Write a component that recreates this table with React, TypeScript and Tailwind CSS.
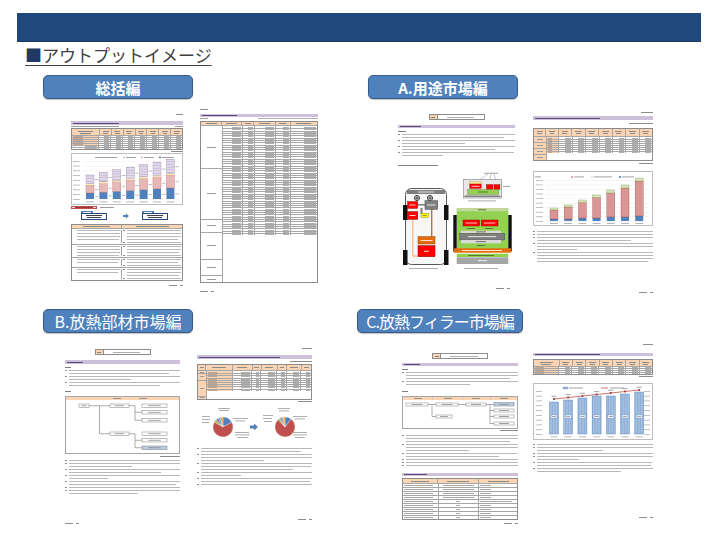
import React from "react";

// Thumbnails of the report pages are drawn as miniature documents:
// grey hairlines stand for body text, orange/lavender blocks for table heads and section bars.

const fx = (w: number) => ({ flex: `${w} 1 0px`, minWidth: 0 });

function Dash({ w = 60, c = "bg-[#9d9d9d]" }: { w?: number; c?: string }) {
  return <div className={`h-px shrink-0 ${c}`} style={{ width: `${w}%` }} />;
}

const LW = [100, 97, 100, 98, 100, 99, 96, 100, 98, 100, 97, 100, 98, 99];
const LAST = [0.9, 0.55, 0.8, 0.35, 0.95, 0.7, 0.6, 0.85];

function Paras({ paras, numbered = true }: { paras: number[]; numbered?: boolean }) {
  let k = 0;
  return (
    <div className="flex flex-col gap-[2px]">
      {paras.flatMap((n, p) =>
        Array.from({ length: n }, (_, i) => {
          const base = LW[k++ % LW.length];
          const w = n > 1 && i === n - 1 ? base * LAST[p % LAST.length] : base;
          return (
            <div key={`${p}-${i}`} className="flex h-px items-center gap-[2px]">
              <div className={`h-px w-[2px] shrink-0 ${numbered && i === 0 ? "bg-[#8c8c8c]" : ""}`} />
              <div className="h-px bg-[#b9b9b9]" style={{ width: `${w}%` }} />
            </div>
          );
        })
      )}
    </div>
  );
}

function LavBar({ w = 45, h = "h-[4px]" }: { w?: number; h?: string }) {
  return (
    <div className={`${h} flex items-center bg-[#ccc0da] pl-[2px]`}>
      <Dash w={w} c="bg-[#5f497a]" />
    </div>
  );
}

function Label({ right = true, w = "w-[10px]" }: { right?: boolean; w?: string }) {
  return (
    <div className={`flex h-px ${right ? "justify-end" : "justify-start"}`}>
      <div className={`h-px ${w} bg-[#8c8c8c]`} />
    </div>
  );
}

function PageNo({ right = true }: { right?: boolean }) {
  return (
    <div className={`flex h-px ${right ? "justify-end" : "justify-start"}`}>
      <div className="flex gap-[3px]">
        <div className="h-px w-[8px] bg-[#8c8c8c]" />
        <div className="h-px w-[3px] bg-[#8c8c8c]" />
      </div>
    </div>
  );
}

function TitleBox() {
  return (
    <div className="mx-auto flex h-[6px] w-[56px] border border-[#8c8c8c]">
      <div className="flex w-[8px] items-center justify-center border-r border-[#8c8c8c] bg-[#fbd4b4]">
        <div className="h-px w-[4px] bg-[#7f7f7f]" />
      </div>
      <div className="flex flex-1 items-center justify-center">
        <Dash w={60} c="bg-[#b0b0b0]" />
      </div>
    </div>
  );
}

function TRow({
  cols,
  h,
  orange = 0,
  head = false,
  top = true,
}: {
  cols: number[];
  h: number;
  orange?: number;
  head?: boolean;
  top?: boolean;
}) {
  return (
    <div className={`flex ${top ? "border-t border-[#a6a6a6]" : ""}`} style={{ height: h }}>
      {cols.map((w, i) => (
        <div
          key={i}
          style={fx(w)}
          className={`flex flex-col gap-[1px] ${i ? "border-l border-[#a6a6a6]" : ""} ${
            head || i < orange ? "bg-[#fbd4b4]" : "bg-white"
          } ${head ? "items-center justify-center" : i < orange ? "items-start justify-center pl-[1px]" : "items-end justify-center pr-[1px]"}`}
        >
          <Dash w={head ? 55 : i < orange ? 40 : 50} c={head ? "bg-[#8a8a8a]" : i < orange ? "bg-[#c4a48c]" : "bg-[#b0b0b0]"} />
          {head && h >= 6 ? <Dash w={40} c="bg-[#8a8a8a]" /> : null}
        </div>
      ))}
    </div>
  );
}

function GroupTable({
  left,
  groups,
  cols,
  rowH,
  headH,
  orange = 0,
  leftBg = "bg-[#fbd4b4]",
}: {
  left: number;
  groups: number[];
  cols: number[];
  rowH: number;
  headH: number;
  orange?: number;
  leftBg?: string;
}) {
  const total = groups.reduce((a, b) => a + b, 0);
  return (
    <div className="border border-[#8c8c8c]">
      <TRow cols={[left, ...cols]} h={headH} head top={false} />
      <div className="flex border-t border-[#a6a6a6]">
        <div style={fx(left)} className={`flex flex-col ${leftBg}`}>
          {groups.map((g, i) => (
            <div
              key={i}
              style={{ height: g * (rowH + 1) - (i === 0 ? 1 : 0) }}
              className={`flex items-center justify-center ${i ? "border-t border-[#a6a6a6]" : ""}`}
            >
              <Dash w={45} c="bg-[#9a9a9a]" />
            </div>
          ))}
        </div>
        <div style={fx(cols.reduce((a, b) => a + b, 0))} className="flex flex-col border-l border-[#a6a6a6]">
          {Array.from({ length: total }, (_, i) => (
            <TRow key={i} cols={cols} h={rowH} orange={orange} top={i > 0} />
          ))}
        </div>
      </div>
    </div>
  );
}

/* ---------- charts & diagrams ---------- */

function SummaryChart() {
  const bars = Array.from({ length: 7 }, (_, i) => {
    const t = i / 6;
    return [6 + 5 * t, 8 + 5 * t, 1.5, 8.5 + 5.5 * t];
  });
  const fills = ["#4f81bd", "#e6b9b8", "#fff2b3", "#ccc0da"];
  return (
    <svg width="112" height="52" className="block">
      <rect x="0.5" y="0.5" width="111" height="51" fill="#fff" stroke="#bfbfbf" />
      <rect x="24" y="4" width="22" height="0.8" fill="#8c8c8c" />
      <rect x="52" y="3.6" width="2" height="1.6" fill="#ccc0da" />
      <rect x="55" y="4" width="10" height="0.8" fill="#8c8c8c" />
      <rect x="70" y="3.6" width="2" height="1.6" fill="#e6b9b8" />
      <rect x="73" y="4" width="10" height="0.8" fill="#8c8c8c" />
      <rect x="88" y="3.6" width="2" height="1.6" fill="#4f81bd" />
      <rect x="91" y="4" width="12" height="0.8" fill="#8c8c8c" />
      {Array.from({ length: 9 }, (_, k) => (
        <g key={k}>
          <rect x="2" y={8 + k * 4.75} width="7" height="0.7" fill="#a6a6a6" />
          <rect x="12" y={8.3 + k * 4.75} width="97" height="0.3" fill="#e3e3e3" />
        </g>
      ))}
      {bars.map((segs, i) => {
        const x = 15 + i * 13.4;
        let y = 46;
        return (
          <g key={i}>
            {segs.map((h, j) => {
              y -= h;
              const top = y;
              return (
                <g key={j}>
                  <rect x={x} y={top} width="8" height={h} fill={fills[j]} stroke={j === 1 ? "#c0504d" : j === 3 ? "#8064a2" : "none"} strokeWidth="0.3" />
                  {j === 3
                    ? Array.from({ length: Math.floor(h / 1.6) }, (_, s) => (
                        <rect key={s} x={x} y={top + 0.8 + s * 1.6} width="8" height="0.4" fill="#fff" />
                      ))
                    : null}
                  {j !== 2 ? <rect x={x + 9} y={top + h / 2} width="3.5" height="0.7" fill="#a6a6a6" /> : null}
                </g>
              );
            })}
            <rect x={x} y="48.5" width="8" height="0.8" fill="#a6a6a6" />
          </g>
        );
      })}
    </svg>
  );
}

function MarketChart() {
  const tot = [13, 16, 21, 26, 31, 36, 43];
  const blue = [2, 2, 3, 3, 4, 4, 5];
  const grn = [2, 2, 2.5, 2.5, 3, 3, 3];
  return (
    <svg width="120" height="55" className="block">
      <rect x="0.5" y="0.5" width="119" height="54" fill="#fff" stroke="#bfbfbf" />
      <rect x="2" y="5.5" width="6" height="0.8" fill="#8c8c8c" />
      <rect x="38" y="5.2" width="2" height="1.6" fill="#d99694" />
      <rect x="41" y="5.5" width="10" height="0.8" fill="#8c8c8c" />
      <rect x="58" y="5.2" width="2" height="1.6" fill="#d7e4bd" />
      <rect x="61" y="5.5" width="18" height="0.8" fill="#8c8c8c" />
      <rect x="86" y="5.2" width="2" height="1.6" fill="#4f81bd" />
      <rect x="89" y="5.5" width="12" height="0.8" fill="#8c8c8c" />
      {Array.from({ length: 10 }, (_, k) => (
        <g key={k}>
          <rect x="3" y={9 + k * 4.55} width="7" height="0.7" fill="#a6a6a6" />
          <rect x="13" y={9.3 + k * 4.55} width="103" height="0.3" fill="#dedede" />
        </g>
      ))}
      {tot.map((t, i) => {
        const x = 17 + i * 14.2;
        const b = 50;
        return (
          <g key={i}>
            <rect x={x} y={b - blue[i]} width="8" height={blue[i]} fill="#4f81bd" />
            <rect x={x} y={b - t + grn[i]} width="8" height={t - blue[i] - grn[i]} fill="#d99694" stroke="#953735" strokeWidth="0.3" />
            <rect x={x} y={b - t} width="8" height={grn[i]} fill="#d7e4bd" stroke="#77933c" strokeWidth="0.3" />
            <rect x={x} y="52" width="8" height="0.8" fill="#a6a6a6" />
          </g>
        );
      })}
    </svg>
  );
}

function FillerChart() {
  const tops = [19, 17, 15, 13, 13, 11, 9];
  const line = [16, 14.5, 13, 11.5, 10, 8.5, 7];
  const cx = (i: number) => 21 + i * 14.2;
  return (
    <svg width="120" height="57" className="block">
      <defs>
        <pattern id="stripe" width="1.6" height="4" patternUnits="userSpaceOnUse">
          <rect width="1.6" height="4" fill="#a9c2e2" />
          <rect width="0.5" height="4" fill="#7fa2cf" />
        </pattern>
      </defs>
      <rect x="0.5" y="0.5" width="119" height="56" fill="#fff" stroke="#bfbfbf" />
      <rect x="30" y="4" width="5" height="2" fill="#95b3d7" stroke="#4f81bd" strokeWidth="0.3" />
      <rect x="36" y="4.6" width="14" height="0.8" fill="#8c8c8c" />
      <rect x="68" y="4.6" width="7" height="0.8" fill="#c0504d" />
      <rect x="77" y="4.6" width="14" height="0.8" fill="#8c8c8c" />
      {Array.from({ length: 10 }, (_, k) => (
        <g key={k}>
          <rect x="3" y={8 + k * 4.8} width="6" height="0.7" fill="#a6a6a6" />
          <rect x="111" y={8 + k * 4.8} width="6" height="0.7" fill="#a6a6a6" />
        </g>
      ))}
      {tops.map((t, i) => (
        <g key={i}>
          <rect x={cx(i) - 4.5} y={t} width="9" height={51 - t} fill="url(#stripe)" stroke="#4f81bd" strokeWidth="0.4" />
          <rect x={cx(i) - 3} y="32" width="6" height="3" fill="#fff" stroke="#4f81bd" strokeWidth="0.3" />
          <rect x={cx(i) - 2} y="33.1" width="4" height="0.8" fill="#8c8c8c" />
          <rect x={cx(i) - 3.5} y="53.5" width="7" height="0.8" fill="#a6a6a6" />
          <rect x={cx(i) - 2.5} y={line[i] - 3.2} width="5" height="0.8" fill="#8c8c8c" />
        </g>
      ))}
      <polyline points={line.map((y, i) => `${cx(i)},${y}`).join(" ")} fill="none" stroke="#c0504d" strokeWidth="0.8" />
      {line.map((y, i) => (
        <rect key={i} x={cx(i) - 0.9} y={y - 0.9} width="1.8" height="1.8" fill="#953735" />
      ))}
    </svg>
  );
}

function arc(cx: number, cy: number, r: number, a0: number, a1: number) {
  const p = (a: number) => [cx + r * Math.sin((a * Math.PI) / 180), cy - r * Math.cos((a * Math.PI) / 180)];
  const [x0, y0] = p(a0);
  const [x1, y1] = p(a1);
  return `M${cx},${cy} L${x0},${y0} A${r},${r} 0 ${a1 - a0 > 180 ? 1 : 0} 1 ${x1},${y1} Z`;
}

function Pies() {
  const L: [number, number, string][] = [
    [0, 62, "#4f81bd"],
    [62, 300, "#c0504d"],
    [300, 316, "#9bbb59"],
    [316, 330, "#8064a2"],
    [330, 344, "#4bacc6"],
    [344, 360, "#f79646"],
  ];
  const R: [number, number, string][] = [
    [0, 38, "#4f81bd"],
    [38, 318, "#c0504d"],
    [318, 330, "#9bbb59"],
    [330, 340, "#8064a2"],
    [340, 350, "#4bacc6"],
    [350, 360, "#f79646"],
  ];
  const labels = [
    [21, 2, 12], [22, 4, 10],
    [5, 10, 8], [5, 13, 8], [5, 16, 7],
    [36, 12, 15], [38, 14.5, 10],
    [38, 26, 14], [38, 28.5, 15], [40, 31, 11],
    [81, 2, 12], [82, 4.5, 10],
    [66, 9, 10], [66, 12, 9], [67, 15, 8],
    [96, 10, 14], [98, 12.5, 10],
    [95, 26, 15], [96, 28.5, 14], [98, 31, 10],
  ];
  return (
    <svg width="115" height="40" className="block">
      {L.map(([a, b, c], i) => (
        <path key={i} d={arc(26, 21, 10, a, b)} fill={c} stroke="#fff" strokeWidth="0.3" />
      ))}
      {R.map(([a, b, c], i) => (
        <path key={i} d={arc(88, 21, 10, a, b)} fill={c} stroke="#fff" strokeWidth="0.3" />
      ))}
      <path d="M53 19.5 H57 V17.5 L61 21 L57 24.5 V22.5 H53 Z" fill="#4f81bd" />
      {labels.map(([x, y, w], i) => (
        <rect key={i} x={x} y={y} width={w} height="0.8" fill="#9a9a9a" />
      ))}
    </svg>
  );
}

function Bx({ x, y, w, h = 3.5, fill = "#fff" }: { x: number; y: number; w: number; h?: number; fill?: string }) {
  return (
    <g>
      <rect x={x} y={y} width={w} height={h} fill={fill} stroke="#7f7f7f" strokeWidth="0.5" />
      <rect x={x + w * 0.25} y={y + h / 2 - 0.4} width={w * 0.5} height="0.8" fill="#8c8c8c" />
    </g>
  );
}

function TreeB() {
  const ln = { stroke: "#595959", strokeWidth: 0.5, fill: "none" };
  return (
    <svg width="115" height="58" className="block">
      <rect x="0.5" y="0.5" width="114" height="57" fill="#fff" stroke="#a6a6a6" />
      <rect x="1" y="1" width="113" height="3" fill="#fbd4b4" />
      <rect x="48" y="2.1" width="8" height="0.8" fill="#7f7f7f" />
      <rect x="74" y="2.1" width="8" height="0.8" fill="#7f7f7f" />
      <path d="M24 9.75 H45 M34.5 9.75 V37.75 H45 M64 9.75 H70 M70 9.75 V24.25 H77 M70 16.25 H77 M64 37.75 H70 M70 37.75 V51.75 H77 M70 44.25 H77" {...ln} />
      <Bx x={14} y={8} w={10} />
      <Bx x={45} y={8} w={19} />
      <Bx x={77} y={8} w={25} />
      <Bx x={77} y={14.5} w={25} />
      <Bx x={77} y={22.5} w={25} />
      <Bx x={45} y={36} w={19} />
      <Bx x={77} y={36} w={25} />
      <Bx x={77} y={42.5} w={25} />
      <Bx x={77} y={50} w={25} fill="#b8cce4" />
    </svg>
  );
}

function TreeC() {
  const ln = { stroke: "#595959", strokeWidth: 0.5, fill: "none" };
  return (
    <svg width="116" height="33" className="block">
      <rect x="0.5" y="0.5" width="115" height="32" fill="#fff" stroke="#a6a6a6" />
      <rect x="1" y="1" width="114" height="3" fill="#fbd4b4" />
      {[30, 60, 88].map((x) => (
        <rect key={x} x={x} y="1" width="0.4" height="3" fill="#a6a6a6" />
      ))}
      {[12, 42, 70, 98].map((x) => (
        <rect key={x} x={x} y="2.1" width="8" height="0.8" fill="#7f7f7f" />
      ))}
      <path d="M26 8.5 H34 M30 8.5 V20.5 H34 M56 8.5 H64 M84 8.5 H92 M88 8.5 V27.5 H92 M88 14.5 H92 M88 20.5 H92" {...ln} />
      <Bx x={4} y={7} w={22} h={3} />
      <Bx x={34} y={7} w={22} h={3} />
      <Bx x={64} y={7} w={20} h={3} />
      <Bx x={92} y={6.5} w={20} h={3.5} fill="#b8cce4" />
      <Bx x={92} y={13} w={20} h={3} />
      <Bx x={92} y={19} w={20} h={3} />
      <Bx x={92} y={26} w={20} h={3} />
      <Bx x={34} y={19} w={16} h={3} />
    </svg>
  );
}

function CarDiagram() {
  const wd = (x: number, y: number, w: number, c = "#ffffff") => (
    <rect x={x} y={y} width={w} height="0.8" fill={c} />
  );
  return (
    <svg width="117" height="98" className="block">
      {/* vehicle */}
      <rect x="7.5" y="16.5" width="41" height="76" rx="6" fill="#f7f7f7" stroke="#595959" strokeWidth="1" />
      <rect x="5" y="33" width="4.5" height="15" fill="#111" />
      <rect x="46" y="33" width="4.5" height="15" fill="#111" />
      <rect x="5" y="78" width="4.5" height="15" fill="#111" />
      <rect x="46" y="78" width="4.5" height="15" fill="#111" />
      <rect x="9" y="18" width="38" height="4" fill="#7f7f7f" />
      {wd(20, 19.6, 16)}
      <circle cx="19" cy="26" r="2.6" fill="#fff" stroke="#000" strokeWidth="0.7" />
      <path d="M16.6 26 H21.4 M19 23.6 V28.4" stroke="#000" strokeWidth="0.7" />
      <circle cx="32" cy="26" r="2.6" fill="#fff" stroke="#000" strokeWidth="0.7" />
      <path d="M29.6 26 H34.4 M32 23.6 V28.4" stroke="#000" strokeWidth="0.7" />
      <path d="M14.7 47.3 V84 H20" stroke="#fac090" strokeWidth="1.4" fill="none" />
      <path d="M33.7 37 V64.7" stroke="#c0703a" strokeWidth="1.4" fill="none" />
      <rect x="19.7" y="32" width="7.3" height="1.5" fill="#7f7f7f" />
      <rect x="22.5" y="36" width="2" height="6" fill="#7f7f7f" />
      <rect x="9.7" y="29.7" width="10" height="6.6" fill="#ff0000" stroke="#7f0000" strokeWidth="0.5" />
      {wd(11.5, 32.6, 6)}
      <rect x="27" y="28.7" width="12.7" height="8.6" fill="#808080" stroke="#404040" strokeWidth="0.5" />
      {wd(29, 32.6, 8.5)}
      <rect x="9.7" y="39.7" width="10" height="7.6" fill="#ff0000" stroke="#7f0000" strokeWidth="0.5" />
      {wd(11.5, 43.1, 6)}
      <rect x="23" y="41.3" width="7.3" height="4" fill="#ffff00" stroke="#7f7f00" strokeWidth="0.4" />
      {wd(24.5, 43, 4.3, "#7f7f7f")}
      <rect x="20" y="64.7" width="17" height="7.3" fill="#e46c0a" stroke="#974706" strokeWidth="0.5" />
      {wd(22.5, 68, 12)}
      <rect x="20" y="73.7" width="17" height="11" fill="#ff0000" stroke="#7f0000" strokeWidth="0.5" />
      {wd(26, 78.8, 5)}
      {wd(11, 96, 29, "#9a9a9a")}

      {/* module cross-section */}
      {wd(86, 0.8, 14, "#8c8c8c")}
      <path d="M90 2 L77 11 M93 2 L91 12.5 M96 2 L99 12.5" stroke="#404040" strokeWidth="0.3" />
      <rect x="65.5" y="7.5" width="38" height="18.5" fill="#e8e8e8" stroke="#7f7f7f" strokeWidth="0.6" />
      <rect x="71.7" y="9.8" width="11.6" height="2.2" fill="#ffe699" stroke="#7f6000" strokeWidth="0.2" />
      <rect x="71.7" y="12" width="11.6" height="4.5" fill="#ff0000" stroke="#7f0000" strokeWidth="0.3" />
      {wd(73.5, 13.8, 8)}
      <rect x="88.3" y="12.5" width="6.7" height="5" fill="#ff0000" stroke="#7f0000" strokeWidth="0.3" />
      <rect x="96" y="12.5" width="6" height="5" fill="#ff0000" stroke="#7f0000" strokeWidth="0.3" />
      <rect x="69.7" y="17.5" width="31" height="5" fill="#92d050" stroke="#4f6228" strokeWidth="0.3" />
      {wd(80, 19.6, 10, "#4f6228")}
      <rect x="66.5" y="23.5" width="36" height="1.5" fill="#7f7f7f" />
      {wd(105, 14, 7, "#8c8c8c")}
      {wd(70, 28.5, 28, "#9a9a9a")}

      {/* vehicle layout */}
      <rect x="58.7" y="36.3" width="51.6" height="43.4" fill="#92d050" />
      <rect x="58.7" y="36.3" width="51.6" height="3" fill="#c3d69b" />
      {wd(80, 37.4, 8, "#4f6228")}
      <rect x="55.3" y="43" width="3.4" height="36.7" fill="#111" />
      <rect x="110.3" y="43" width="3.4" height="36.7" fill="#111" />
      <rect x="65" y="48" width="16.7" height="6" fill="#ff0000" stroke="#7f0000" strokeWidth="0.4" />
      {wd(67.5, 50.6, 11.5)}
      <rect x="83.3" y="48" width="16.7" height="6" fill="#ff0000" stroke="#7f0000" strokeWidth="0.4" />
      {wd(85.8, 50.6, 11.5)}
      {wd(69, 56.2, 8, "#4f6228")}
      {wd(87, 56.2, 8, "#4f6228")}
      <rect x="63" y="58.7" width="40" height="2.6" fill="#d9d9d9" />
      {wd(78, 59.5, 10, "#595959")}
      <rect x="61.7" y="61.3" width="45" height="6.7" fill="#7f7f7f" stroke="#404040" strokeWidth="0.4" />
      {wd(70, 64.3, 28)}
      <rect x="63" y="68" width="40" height="3.3" fill="#d9d9d9" />
      {wd(78, 69.3, 10, "#595959")}
      {wd(79, 73, 8, "#4f6228")}
      <rect x="56" y="76.3" width="57" height="4.4" fill="#e46c0a" />
      {wd(64, 78.1, 40)}
      <rect x="58.7" y="81.7" width="51.6" height="3.3" fill="#92d050" />
      {wd(70, 83, 26, "#4f6228")}
      <rect x="58.7" y="85.3" width="51.6" height="6.7" fill="#a6a6a6" />
      {wd(80, 88.3, 9)}
      {wd(66, 96, 34, "#9a9a9a")}
    </svg>
  );
}

/* ---------- pages ---------- */

function MiniBox() {
  return (
    <div className="flex w-[26px] flex-col">
      <div className="flex h-[2px] w-[12px] items-center justify-center bg-[#4f81bd]">
        <div className="h-px w-[8px] bg-white" />
      </div>
      <div className="flex h-[7px] flex-col items-center justify-center gap-[1px] border border-[#1f497d] bg-white">
        <Dash w={70} c="bg-[#404040]" />
        <Dash w={55} c="bg-[#404040]" />
      </div>
    </div>
  );
}

function PageSummary() {
  return (
    <div className="flex flex-col">
      <Label w="w-[7px]" />
      <div className="mt-[6px]">
        <LavBar w={42} />
      </div>
      <div className="mt-[1px] flex h-px justify-between">
        <div className="h-px w-[48px] bg-[#9d9d9d]" />
        <div className="h-px w-[8px] bg-[#9d9d9d]" />
      </div>
      <div className="mt-[1px] border border-[#8c8c8c]">
        <TRow cols={[30, 12, 12, 12, 12, 12, 12, 12]} h={6} head top={false} />
        {Array.from({ length: 7 }, (_, i) => (
          <TRow key={i} cols={[30, 12, 12, 12, 12, 12, 12, 12]} h={2} orange={i < 5 ? 1 : 0} />
        ))}
      </div>
      <div className="mt-[1px]">
        <Label w="w-[12px]" />
      </div>
      <div className="mt-[1px]">
        <SummaryChart />
      </div>
      <div className="mt-[1px] flex h-[3px] items-center gap-[3px]">
        <div className="flex h-[3px] w-[26px] items-center justify-center border border-[#c0504d] bg-[#f2dcdb]">
          <div className="h-px w-[18px] bg-[#953735]" />
        </div>
        <div className="h-px w-[14px] bg-[#9d9d9d]" />
      </div>
      <div className="mt-[2px] flex h-[10px] items-start pl-[10px]">
        <MiniBox />
        <svg width="8" height="10" className="ml-[15px] block">
          <path d="M1 4 H4 V2.5 L7 5 L4 7.5 V6 H1 Z" fill="#4f81bd" />
        </svg>
        <div className="ml-[12px]">
          <MiniBox />
        </div>
      </div>
      <div className="mt-[3px] border border-[#8c8c8c]">
        <TRow cols={[45, 55]} h={3} head top={false} />
        {[
          [4, 4],
          [4, 3],
          [2, 2],
          [2, 3],
        ].map(([a, b], i) => (
          <div key={i} className="flex border-t border-[#a6a6a6] py-[1px]">
            <div style={fx(45)} className="px-[1px]">
              <Paras paras={[a]} numbered={false} />
            </div>
            <div style={fx(55)} className="border-l border-[#a6a6a6] px-[1px]">
              <Paras paras={[b, 1]} />
            </div>
          </div>
        ))}
      </div>
      <div className="mt-[4px]">
        <PageNo />
      </div>
    </div>
  );
}

function PageSpec() {
  return (
    <div className="flex flex-col">
      <Label right={false} w="w-[8px]" />
      <div className="mt-[4px]">
        <LavBar w={30} h="h-[3px]" />
      </div>
      <div className="mt-[1px] flex h-px justify-between">
        <div className="h-px w-[8px] bg-[#9d9d9d]" />
        <div className="h-px w-[60px] bg-[#b0b0b0]" />
      </div>
      <div className="mt-[2px]">
        <GroupTable
          left={16}
          groups={[13, 15, 4, 8, 5, 2]}
          cols={[15, 9, 16, 11, 21]}
          rowH={2.34}
          headH={3}
          leftBg="bg-white"
        />
      </div>
      <div className="mt-[8px]">
        <PageNo right={false} />
      </div>
    </div>
  );
}

function PageUseA() {
  return (
    <div className="flex flex-col">
      <TitleBox />
      <div className="mt-[5px]">
        <LavBar w={18} h="h-[3px]" />
      </div>
      <div className="mt-[3px] h-px w-[8px] bg-[#7f7f7f]" />
      <div className="mt-[2px]">
        <Paras paras={[2, 2, 2, 2]} />
      </div>
      <div className="mt-[9px] h-px w-[40px] bg-[#7f7f7f]" />
      <div className="mt-[6px]">
        <CarDiagram />
      </div>
      <div className="mt-[18px] pr-[5px]">
        <PageNo />
      </div>
    </div>
  );
}

function PageUseB() {
  return (
    <div className="flex flex-col">
      <Label w="w-[12px]" />
      <div className="mt-[3px]">
        <LavBar w={55} />
      </div>
      <div className="mt-[3px]">
        <Label w="w-[24px]" />
      </div>
      <div className="mt-[4px]">
        <GroupTable left={10} groups={[2, 2, 2, 2]} cols={[10, 11, 11, 11, 11, 11, 11, 11]} rowH={2} headH={7} orange={1} />
      </div>
      <div className="mt-[2px]">
        <Label w="w-[14px]" />
      </div>
      <div className="mt-[7px]">
        <MarketChart />
      </div>
      <div className="mt-[5px]">
        <Paras paras={[1, 1, 2, 3, 4]} />
      </div>
      <div className="mt-[30px]">
        <PageNo />
      </div>
    </div>
  );
}

function PageMatA() {
  return (
    <div className="flex flex-col">
      <TitleBox />
      <div className="mt-[5px]">
        <LavBar w={14} />
      </div>
      <div className="mt-[3px] h-px w-[6px] bg-[#7f7f7f]" />
      <div className="mt-[2px]">
        <Paras paras={[2, 2, 2]} />
      </div>
      <div className="mt-[5px] h-px w-[6px] bg-[#7f7f7f]" />
      <div className="mt-[4px]">
        <TreeB />
      </div>
      <div className="mt-[2px]">
        <Label w="w-[20px]" />
      </div>
      <div className="mt-[3px]">
        <Paras paras={[1, 2, 2, 2, 2, 1, 2]} />
      </div>
      <div className="mt-[29px]">
        <PageNo right={false} />
      </div>
    </div>
  );
}

function PageMatB() {
  return (
    <div className="flex flex-col">
      <Label w="w-[10px]" />
      <div className="mt-[6px]">
        <LavBar w={72} />
      </div>
      <div className="mt-[2px]">
        <Label w="w-[22px]" />
      </div>
      <div className="mt-[2px]">
        <GroupTable left={8} groups={[1, 2, 5, 1]} cols={[28, 20, 9, 16, 9, 15, 10]} rowH={2.2} headH={5} orange={1} />
      </div>
      <div className="mt-[1px]">
        <Label w="w-[14px]" />
      </div>
      <div className="mt-[4px]">
        <Pies />
      </div>
      <div className="mt-[2px]">
        <Paras paras={[2, 3, 3, 2, 2, 1]} />
      </div>
      <div className="mt-[34px]">
        <PageNo />
      </div>
    </div>
  );
}

function PageFillA() {
  return (
    <div className="flex flex-col">
      <TitleBox />
      <div className="mt-[4px]">
        <LavBar w={14} h="h-[3px]" />
      </div>
      <div className="mt-[3px] h-px w-[6px] bg-[#7f7f7f]" />
      <div className="mt-[2px]">
        <Paras paras={[3, 2]} />
      </div>
      <div className="mt-[6px] h-px w-[6px] bg-[#7f7f7f]" />
      <div className="mt-[4px]">
        <TreeC />
      </div>
      <div className="mt-[1px]">
        <Label w="w-[18px]" />
      </div>
      <div className="mt-[4px]">
        <Paras paras={[3, 3, 2, 1, 1, 1]} />
      </div>
      <div className="mt-[7px]">
        <LavBar w={20} h="h-[3px]" />
      </div>
      <div className="mt-[2px] border border-[#8c8c8c]">
        <TRow cols={[35, 42, 39]} h={4} head top={false} />
        {Array.from({ length: 9 }, (_, i) => (
          <div key={i} className="flex h-[4px] border-t border-[#a6a6a6]">
            <div style={fx(35)} className="flex flex-col justify-center gap-[1px] px-[1px]">
              <Dash w={90} c="bg-[#a8a8a8]" />
            </div>
            <div style={fx(42)} className="flex items-center justify-center border-l border-[#a6a6a6]">
              <Dash w={i < 4 ? 80 : 10} c="bg-[#a8a8a8]" />
            </div>
            <div style={fx(39)} className="flex items-center border-l border-[#a6a6a6] px-[1px]">
              <Dash w={i === 4 ? 90 : 30} c="bg-[#a8a8a8]" />
            </div>
          </div>
        ))}
      </div>
      <div className="mt-[3px]">
        <PageNo />
      </div>
    </div>
  );
}

function PageFillB() {
  return (
    <div className="flex flex-col">
      <Label w="w-[10px]" />
      <div className="mt-[8px]">
        <LavBar w={55} h="h-[3px]" />
      </div>
      <div className="mt-[3px] border border-[#8c8c8c]">
        <TRow cols={[22, 11, 11, 11, 11, 11, 11, 11]} h={6} head top={false} />
        {Array.from({ length: 4 }, (_, i) => (
          <TRow key={i} cols={[22, 11, 11, 11, 11, 11, 11, 11]} h={2} orange={1} />
        ))}
      </div>
      <div className="mt-[1px]">
        <Label w="w-[14px]" />
      </div>
      <div className="mt-[6px]">
        <FillerChart />
      </div>
      <div className="mt-[4px]">
        <Paras paras={[1, 2, 1, 2, 2, 2]} />
      </div>
      <div className="mt-[45px]">
        <PageNo />
      </div>
    </div>
  );
}

function Btn({ children, cls, big = false }: { children: React.ReactNode; cls: string; big?: boolean }) {
  return (
    <div
      className={`${cls} flex h-[24px] items-center justify-center rounded-[5px] border-[1.5px] border-[#385d8a] bg-[#4f81bd] text-white shadow-[0_1px_1px_rgba(0,0,0,0.25)] ${
        big ? "text-[16px] leading-none" : "text-[15px] font-bold leading-none"
      }`}
    >
      {children}
    </div>
  );
}

export default function App() {
  return (
    <div className="h-[540px] w-[720px] overflow-hidden bg-white pt-[13px] font-[family-name:'Noto_Sans_CJK_JP','Noto_Sans',sans-serif]">
      <div className="ml-[17px] h-[29px] w-[684px] border-b border-[#17375e] bg-[#1f497d]" />
      <div className="ml-[25px] mt-[3px] h-[20px] text-[17px] leading-[20px] text-[#404040]">
        <span className="underline decoration-1 underline-offset-[3px]">
          <span className="text-[#1f3864]">■</span>アウトプットイメージ
        </span>
      </div>

      <div className="mt-[10px] flex">
        <section className="w-[355px]">
          <Btn cls="ml-[43px] w-[150px]">総括編</Btn>
          <div className="mt-[6px] flex h-[204px] items-start">
            <div className="ml-[71px] mt-[9px] w-[112px]">
              <PageSummary />
            </div>
            <div className="ml-[17px] mt-[4px] w-[118px]">
              <PageSpec />
            </div>
          </div>
        </section>
        <section className="w-[365px]">
          <Btn cls="ml-[13px] w-[150px]">A.用途市場編</Btn>
          <div className="mt-[6px] flex h-[204px] items-start">
            <div className="ml-[43px] mt-[9px] w-[117px]">
              <PageUseA />
            </div>
            <div className="ml-[18px] mt-[7px] w-[120px]">
              <PageUseB />
            </div>
          </div>
        </section>
      </div>

      <div className="flex">
        <section className="w-[355px]">
          <Btn cls="ml-[43px] w-[150px]" big>
            B.放熱部材市場編
          </Btn>
          <div className="mt-[6px] flex items-start">
            <div className="ml-[65px] mt-[10px] w-[115px]">
              <PageMatA />
            </div>
            <div className="ml-[17px] mt-[9px] w-[115px]">
              <PageMatB />
            </div>
          </div>
        </section>
        <section className="w-[365px]">
          <Btn cls="ml-[2px] w-[166px] tracking-[-1px]" big>
            C.放熱フィラー市場編
          </Btn>
          <div className="mt-[6px] flex items-start">
            <div className="ml-[47px] mt-[14px] w-[116px]">
              <PageFillA />
            </div>
            <div className="ml-[15px] mt-[5px] w-[120px]">
              <PageFillB />
            </div>
          </div>
        </section>
      </div>
    </div>
  );
}
